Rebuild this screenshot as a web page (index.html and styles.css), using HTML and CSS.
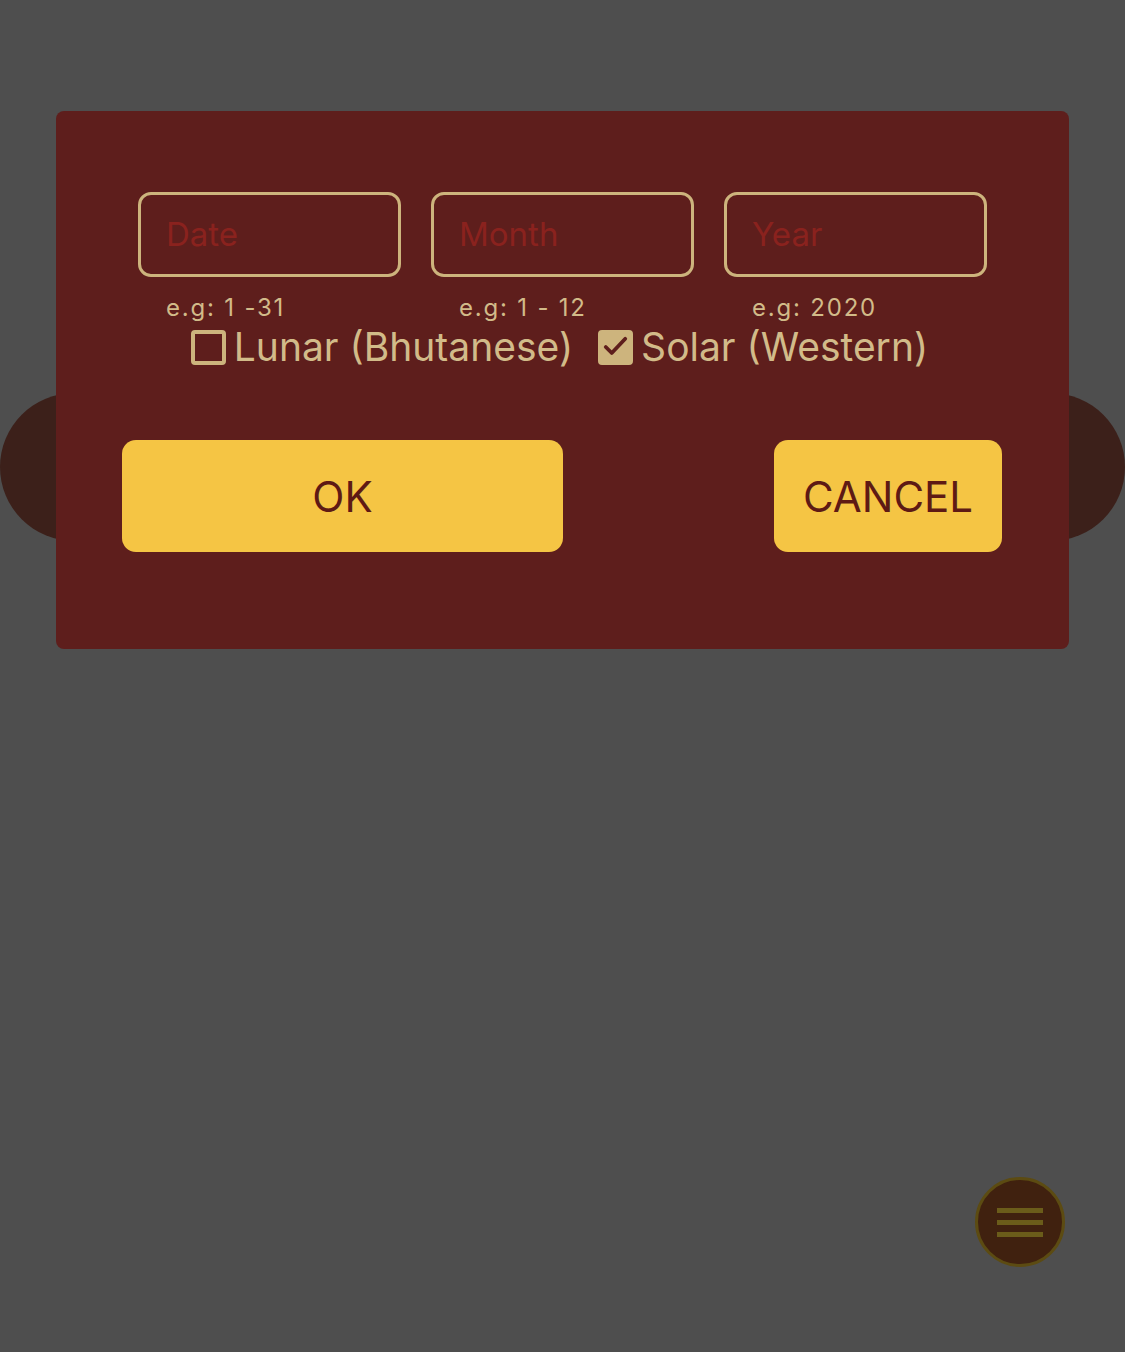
FILE: index.html
```html
<!DOCTYPE html>
<html>
<head>
<meta charset="utf-8">
<link rel="stylesheet" href="styles.css">
</head>
<body>
<div class="screen">
  <div class="bg-content">
    <div class="pill"></div>
  </div>

  <div class="dialog">
    <div class="fields">
      <div class="field">
        <div class="input"><span class="placeholder">Date</span></div>
        <div class="hint">e.g: 1 -31</div>
      </div>
      <div class="field">
        <div class="input"><span class="placeholder">Month</span></div>
        <div class="hint">e.g: 1 - 12</div>
      </div>
      <div class="field">
        <div class="input"><span class="placeholder">Year</span></div>
        <div class="hint">e.g: 2020</div>
      </div>
    </div>
    <div class="options">
      <label class="option">
        <span class="box"></span>
        <span class="option-text">Lunar (Bhutanese)</span>
      </label>
      <label class="option">
        <span class="box checked">
          <svg viewBox="0 0 36 36"><path d="M5 18 L13 26 L31 7" fill="none" stroke="#5e1e1c" stroke-width="5" stroke-linecap="round" stroke-linejoin="round"/></svg>
        </span>
        <span class="option-text">Solar (Western)</span>
      </label>
    </div>
    <div class="actions">
      <button class="btn btn-ok">OK</button>
      <button class="btn btn-cancel">CANCEL</button>
    </div>
  </div>

  <button class="fab" aria-label="menu">
    <span class="bar"></span>
    <span class="bar"></span>
    <span class="bar"></span>
  </button>
</div>
</body>
</html>
```

FILE: styles.css
```css
html, body {
  margin: 0;
  padding: 0;
}
body {
  background: #4e4e4e;
  font-family: "Inter", "Roboto", "Noto Sans", sans-serif;
}
.screen {
  position: relative;
  width: 1125px;
  height: 1352px;
  overflow: hidden;
}
.bg-content {
  padding-top: 393px;
}
.pill {
  height: 148px;
  border-radius: 74px;
  background: #3c201a;
}
.dialog {
  position: absolute;
  left: 56px;
  top: 111px;
  width: 1013px;
  height: 538px;
  box-sizing: border-box;
  background: #5e1e1c;
  border-radius: 8px;
  padding-top: 81px;
}
.fields {
  display: flex;
  gap: 30px;
  padding: 0 82px;
}
.field {
  flex: 1;
}
.input {
  height: 85px;
  box-sizing: border-box;
  border: 3px solid #cdb47d;
  border-radius: 13px;
  display: flex;
  align-items: center;
  padding-left: 25px;
  padding-bottom: 2px;
}
.placeholder {
  color: #8a221e;
  font-size: 33px;
}
.hint {
  color: #d2bb89;
  font-size: 24px;
  letter-spacing: 1.8px;
  padding-left: 28px;
  margin-top: 16px;
  line-height: 30px;
}
.options {
  display: flex;
  justify-content: center;
  gap: 25px;
  margin-top: 1px;
  padding-right: 6px;
}
.option {
  display: flex;
  align-items: center;
  gap: 8px;
}
.box {
  width: 35px;
  height: 35px;
  box-sizing: border-box;
  border: 4px solid #cdb47d;
  border-radius: 4px;
  display: flex;
  align-items: center;
  justify-content: center;
}
.box.checked {
  background: #cdb47d;
}
.box svg {
  width: 30px;
  height: 30px;
}
.option-text {
  color: #d2bb89;
  font-size: 39px;
  line-height: 46px;
}
.actions {
  display: flex;
  justify-content: space-between;
  padding: 0 67px 0 66px;
  margin-top: 70px;
}
.btn {
  height: 112px;
  border: none;
  border-radius: 14px;
  background: #f5c544;
  color: #5e1a14;
  font-family: inherit;
  font-size: 42px;
}
.btn-ok {
  width: 441px;
}
.btn-cancel {
  width: 228px;
}
.fab {
  position: absolute;
  left: 975px;
  top: 1177px;
  width: 90px;
  height: 90px;
  box-sizing: border-box;
  border-radius: 50%;
  background: #40210f;
  border: 3px solid #5c4b12;
  display: flex;
  flex-direction: column;
  align-items: center;
  justify-content: center;
  gap: 7px;
  padding: 0;
}
.bar {
  display: block;
  width: 46px;
  height: 5px;
  background: #6b5c1a;
}
```
